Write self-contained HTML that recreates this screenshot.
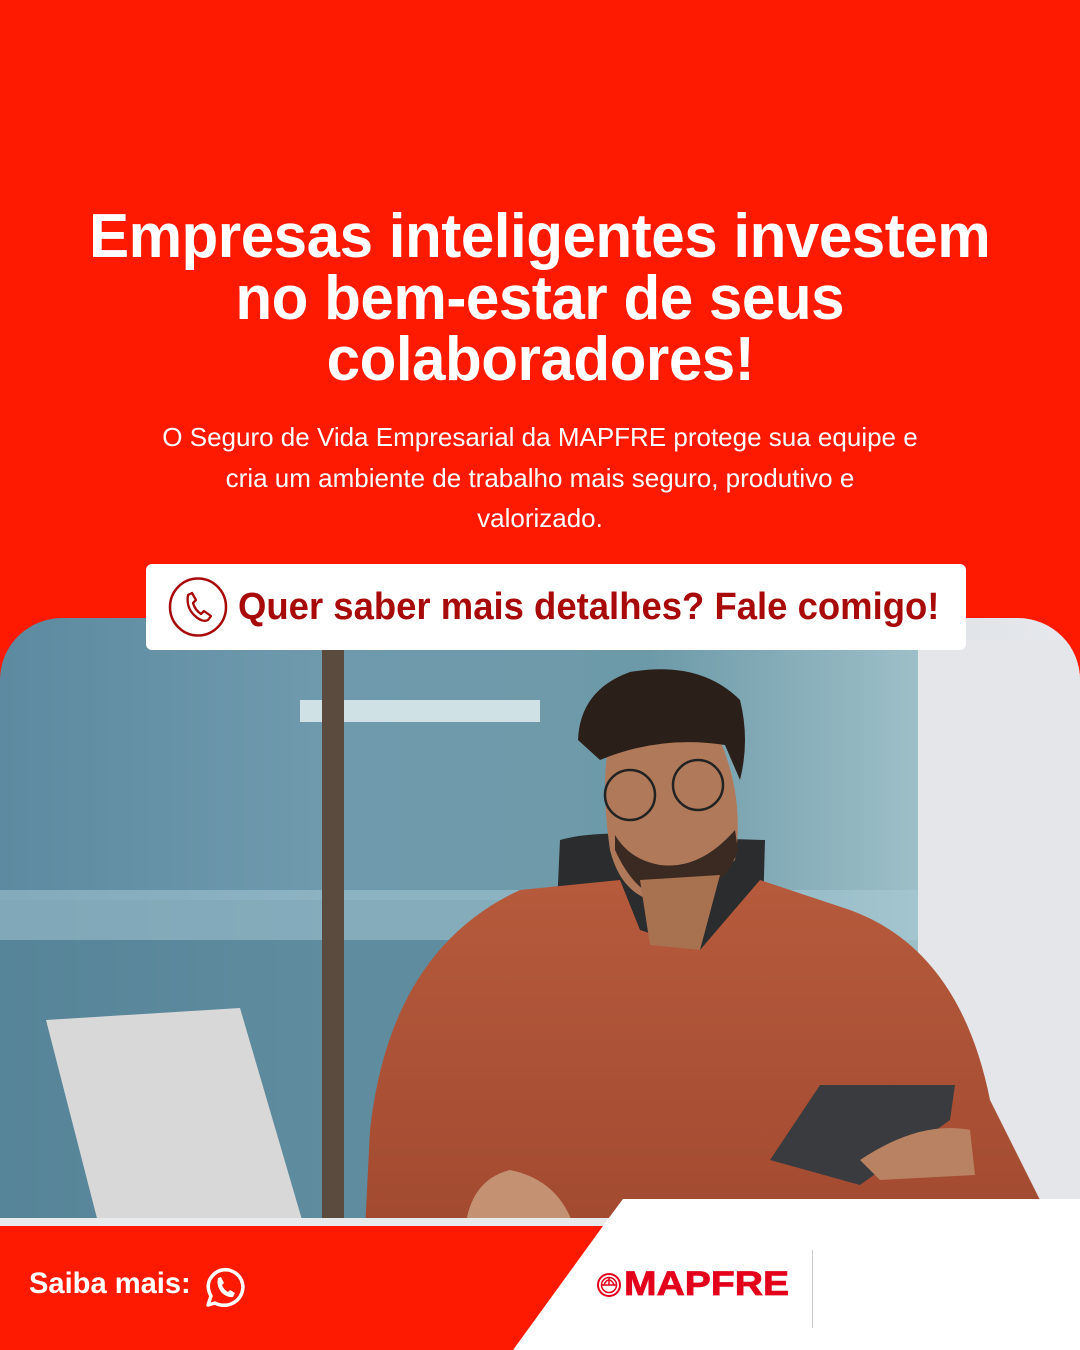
<!DOCTYPE html>
<html><head><meta charset="utf-8"><style>
*{margin:0;padding:0;box-sizing:border-box}
body{width:1080px;height:1350px;overflow:hidden;background:#fe1a00;font-family:"Liberation Sans",sans-serif;position:relative}
.t{position:absolute;left:0;width:1080px;text-align:center;color:#fff;font-weight:bold;font-size:62px;line-height:62px;letter-spacing:-0.5px}
.t span{display:inline-block;transform:scaleX(0.97);white-space:nowrap}
.s{position:absolute;left:120px;width:840px;text-align:center;color:#fff;font-size:26px;line-height:40.5px;top:417px}
.photo{position:absolute;left:0;top:618px;width:1080px;height:620px;border-radius:62px 62px 0 0;overflow:hidden}
.btn{position:absolute;left:146px;top:564px;width:820px;height:86px;background:#fff;border-radius:6px}
.btn .q{position:absolute;top:22px;font-weight:bold;font-size:38px;color:#a80a0a;white-space:nowrap;transform-origin:0 0;transform:scaleX(0.96);left:92px}
</style></head><body>
<div class="t" style="top:206px"><span>Empresas inteligentes investem</span></div>
<div class="t" style="top:268px"><span>no bem-estar de seus</span></div>
<div class="t" style="top:329px"><span>colaboradores!</span></div>
<div class="s">O Seguro de Vida Empresarial da MAPFRE protege sua equipe e<br>cria um ambiente de trabalho mais seguro, produtivo e<br>valorizado.</div>

<div class="photo">
<svg width="1080" height="620" viewBox="0 618 1080 620">
<defs>
<linearGradient id="bg" x1="0" x2="1" y1="0" y2="0">
<stop offset="0" stop-color="#5d8aa0"/><stop offset="0.3" stop-color="#6f9aae"/><stop offset="0.6" stop-color="#6d9aa8"/><stop offset="0.85" stop-color="#9dbfc8"/><stop offset="0.86" stop-color="#dfe4e8"/><stop offset="1" stop-color="#e6e8ec"/>
</linearGradient>
<linearGradient id="sh" x1="0" x2="0" y1="0" y2="1"><stop offset="0" stop-color="#b65a3c"/><stop offset="1" stop-color="#a24a30"/></linearGradient>
</defs>
<rect x="0" y="618" width="1080" height="620" fill="url(#bg)"/>
<rect x="0" y="900" width="600" height="330" fill="#4f7e90" opacity="0.5"/>
<rect x="0" y="890" width="920" height="50" fill="#a9ccd8" opacity="0.5"/>
<rect x="300" y="700" width="240" height="22" fill="#e8f2f4" opacity="0.8"/>
<rect x="322" y="650" width="22" height="580" fill="#5b4b3e"/>
<rect x="918" y="640" width="162" height="600" fill="#e4e6ea"/>
<path d="M46 1020 L240 1008 L305 1230 L100 1230 Z" fill="#d8d8d8"/>
<path d="M552 1015 L560 840 Q600 828 700 838 L765 840 L760 1020 Z" fill="#2a2c2e"/>
<path d="M365 1230 L370 1130 Q390 950 520 890 L620 880 L640 930 L700 950 L760 880 L850 910 Q960 950 990 1100 L1040 1200 L1040 1230 Z" fill="url(#sh)"/>
<path d="M610 850 Q600 780 610 740 L720 740 Q745 800 735 860 Q690 905 650 900 Q620 890 610 850 Z" fill="#b07a5a"/>
<path d="M578 740 Q580 690 630 672 Q700 660 740 700 Q750 740 740 780 L725 745 Q660 735 600 760 Z" fill="#2b1f19"/>
<path d="M615 850 Q640 905 680 900 Q725 890 738 850 L735 830 Q700 870 660 865 Q630 860 615 835 Z" fill="#3b2a22"/>
<circle cx="630" cy="795" r="25" fill="none" stroke="#222" stroke-width="2.5"/>
<circle cx="698" cy="785" r="25" fill="none" stroke="#222" stroke-width="2.5"/>
<path d="M640 880 L650 945 L700 950 L720 875 Z" fill="#a8714f"/>
<path d="M770 1160 L820 1085 L955 1085 L950 1120 L860 1185 Z" fill="#3a3b3e"/>
<path d="M860 1160 Q920 1120 970 1130 L975 1175 L880 1180 Z" fill="#b98262"/>
<path d="M465 1230 Q470 1180 510 1170 Q560 1180 575 1230 Z" fill="#c49173"/>
<rect x="0" y="1218" width="620" height="20" fill="#e9eaec"/>
</svg>
</div>

<div class="btn">
<svg style="position:absolute;left:22px;top:13px" width="60" height="60" viewBox="0 0 60 60">
<ellipse cx="30" cy="30" rx="28" ry="28.5" fill="none" stroke="#a80a0a" stroke-width="2.5"/>
<path d="M20 18 L24 16 L28 23 L25 26 Q27 33 33 37 L36 34 L43 39 L40 43 Q34 46 26 38 Q18 30 20 18 Z" fill="none" stroke="#a80a0a" stroke-width="2.3" stroke-linejoin="round"/>
</svg>
<div class="q">Quer saber mais detalhes? Fale comigo!</div>
</div>

<svg style="position:absolute;left:0;top:1190px" width="1080" height="160">
<polygon points="623,9 1080,9 1080,160 510,160" fill="#fff"/>
<polygon points="0,36 603,36 513,160 0,160" fill="#fe1a00"/>
<line x1="812.5" y1="60" x2="812.5" y2="138" stroke="#c8c8c8" stroke-width="1"/>
</svg>
<div style="position:absolute;left:29px;top:1267px;color:#fff;font-weight:bold;font-size:30px;white-space:nowrap;transform-origin:0 0;transform:scaleX(0.97)">Saiba mais:</div>
<svg style="position:absolute;left:202px;top:1265px" width="44" height="44" viewBox="0 0 44 44">
<path d="M6 40 L9 31 Q4 22 8 14 Q15 3 27 5 Q40 9 41 22 Q40 36 26 40 Q18 41 13 38 Z" fill="none" stroke="#fff" stroke-width="3.5" stroke-linejoin="round"/>
<path d="M16 13 L19 12 L22 18 L20 20 Q22 25 26 27 L28 25 L33 28 L31 32 Q26 33 20 28 Q14 21 16 13 Z" fill="#fff"/>
</svg>
<svg style="position:absolute;left:596px;top:1272px" width="26" height="26" viewBox="0 0 26 26">
<circle cx="13" cy="13" r="11" fill="none" stroke="#e3001b" stroke-width="2"/>
<circle cx="13" cy="13" r="7.5" fill="none" stroke="#e3001b" stroke-width="1.5"/>
<path d="M6 13 L20 13 M13 6 L13 13 M8 13 Q10 8 13 8 Q16 8 18 13" fill="none" stroke="#e3001b" stroke-width="1.5"/>
</svg>
<div style="position:absolute;left:624px;top:1265px;color:#e3001b;font-weight:900;font-size:34px;letter-spacing:0px;white-space:nowrap;transform-origin:0 0;transform:scaleX(1.15);-webkit-text-stroke:0.8px #e3001b">MAPFRE</div>
</body></html>
